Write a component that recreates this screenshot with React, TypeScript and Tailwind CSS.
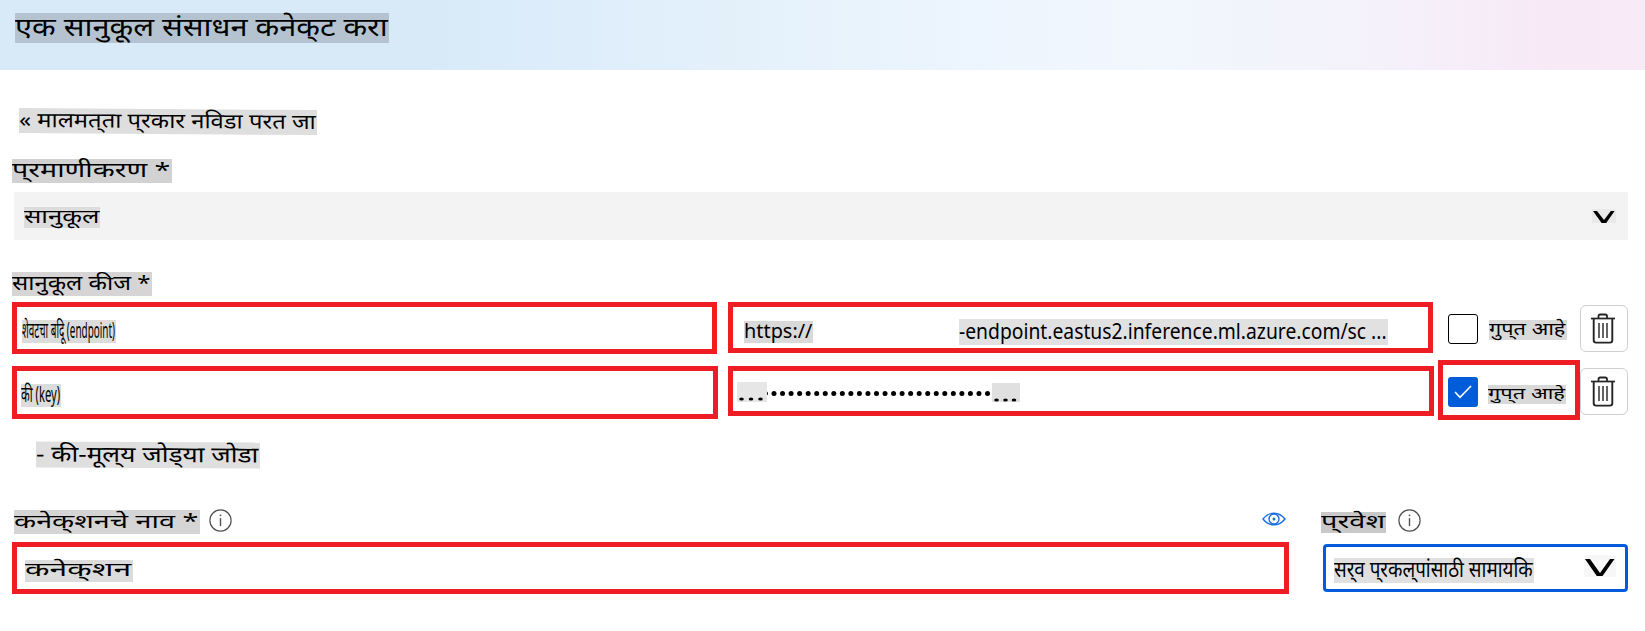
import { useLayoutEffect, useRef, useState } from "react";

type TextProps = { text: string; box: string; type: string };

/* Highlighted text whose glyphs are stretched to fill the width of its box. */
function FitText({ text, box, type }: TextProps) {
  const outer = useRef<HTMLSpanElement>(null);
  const inner = useRef<HTMLSpanElement>(null);
  const [scale, setScale] = useState(1);

  useLayoutEffect(() => {
    if (!outer.current || !inner.current) return;
    setScale((outer.current.offsetWidth - 1) / inner.current.offsetWidth);
  }, [text]);

  return (
    <span ref={outer} className={`flex shrink-0 items-start ${box}`}>
      <span
        ref={inner}
        className={`block h-5 shrink-0 origin-left whitespace-pre leading-5 ${type}`}
        style={{ transform: `scaleX(${scale})` }}
      >
        {text}
      </span>
    </span>
  );
}

function Trash() {
  return (
    <button className="flex h-[47px] w-12 shrink-0 items-center justify-center rounded-md border border-[#cfcfcf] bg-white pr-[2px]">
      <svg width="24" height="31" viewBox="0 0 24 31" fill="none" stroke="#242424">
        <path d="M0 5.5H24" strokeWidth="1.7" />
        <path d="M7.5 5V3.2Q7.5 1.5 9.2 1.5H14.3Q16 1.5 16 3.2V5" strokeWidth="1.8" />
        <path d="M2.7 6V27.3Q2.7 29.6 5 29.6H19Q21.3 29.6 21.3 27.3V6" strokeWidth="1.9" />
        <path d="M8 10V25M12 10V25M16 10V25" strokeWidth="1.4" />
      </svg>
    </button>
  );
}

function Info() {
  return (
    <svg className="shrink-0" width="23" height="23" viewBox="0 0 23 23" fill="none" stroke="#505050">
      <circle cx="11.5" cy="11.5" r="10.6" strokeWidth="1.2" />
      <path d="M11.5 9.2V17" strokeWidth="1.4" />
      <circle cx="11.5" cy="6.3" r="0.9" fill="#505050" stroke="none" />
    </svg>
  );
}

function Eye() {
  return (
    <svg className="shrink-0" width="24" height="14" viewBox="0 0 24 14" fill="none" stroke="#1a6ee0" strokeWidth="1.4">
      <path d="M1 7Q5.5 1.2 12 1.2T23 7Q18.5 12.8 12 12.8T1 7Z" />
      <circle cx="12" cy="7" r="5" />
      <circle cx="12" cy="7" r="1.5" fill="#1a6ee0" stroke="none" />
    </svg>
  );
}

const bullets = Array.from({ length: 26 }, (_, i) => i);

export default function App() {
  return (
    <div className="h-[631px] w-[1645px] overflow-hidden bg-white font-['Noto_Sans','Noto_Sans_Devanagari',sans-serif] text-black">
      <header className="flex h-[70px] items-start bg-[linear-gradient(90deg,#d8eaf8_0%,#d8eaf8_26%,#deedfa_35%,#e4f1fb_45%,#edf5fe_60%,#f2f7fe_69%,#f3f3fb_80%,#f5effa_87%,#f8e9f7_94%,#f9eaf8_100%)] pt-[13px] pl-[15px]">
        <FitText text="एक सानुकूल संसाधन कनेक्‌ट करा" box="h-[30px] w-[374px] bg-[#b4c3cf]" type="mt-[3px] text-[25px]" />
      </header>

      <main className="flex flex-col items-start pl-3">
        <a className="mt-[38px] ml-[7px] flex origin-left skew-y-[0.4deg]">
          <FitText text="« मालमत्‌ता प्‌रकार नविडा परत जा" box="h-[25px] w-[298px] bg-[#dedede]" type="mt-px text-[21px]" />
        </a>

        <div className="mt-[26px]">
          <FitText text="प्‌रमाणीकरण *" box="h-6 w-40 bg-[#d2d2d2]" type="mt-px text-[20px]" />
        </div>

        <div className="mt-[9px] ml-[2px] flex h-12 w-[1614px] items-start justify-between bg-[#f3f3f3] pr-3 pl-[10px]">
          <div className="mt-[15px]">
            <FitText text="सानुकूल" box="h-[21px] w-[76px] bg-[#dcdcdc]" type="-mt-px text-[18.5px]" />
          </div>
          <svg className="mt-[17px] bg-[#e9e9e9]" width="24" height="14" viewBox="0 0 24 14" fill="#000">
            <path d="M1 2H5L12 11L18.8 2H22.6L14.2 14H9.6Z" />
          </svg>
        </div>

        <div className="mt-8">
          <FitText text="सानुकूल कीज *" box="h-6 w-[140px] bg-[#d6d4d5]" type="mt-px text-[20px]" />
        </div>

        <div className="mt-[6px] flex h-[52px] items-start">
          <div className="flex h-[52px] w-[705px] items-start border-[5px] border-[#ee1c23] pt-[13px] pl-[5px]">
            <FitText text="शेवटचा बदिू (endpoint)" box="h-[23px] w-[94px] bg-[#dcdcdc]" type="-mt-px text-[22px]" />
          </div>
          <div className="ml-[11px] flex h-[51px] w-[705px] items-start border-[5px] border-[#ee1c23] pl-[11px]">
            <div className="mt-[14px]">
              <FitText text="https://" box="h-[22px] w-[69px] bg-[#d9d9d9]" type="text-[19px]" />
            </div>
            <div className="mt-3 ml-[146px]">
              <FitText text="-endpoint.eastus2.inference.ml.azure.com/sc ..." box="h-[26px] w-[429px] bg-[#e1e1e1]" type="mt-[2px] text-[21.5px]" />
            </div>
          </div>
          <div className="mt-3 ml-[15px] size-[30px] shrink-0 rounded-[3px] border border-black" />
          <div className="mt-[18px] ml-[11px]">
            <FitText text="गुप्‌त आहे" box="h-5 w-[78px] bg-[#dadada]" type="-mt-[2px] text-[17.5px]" />
          </div>
          <div className="mt-[3px] ml-[13px]">
            <Trash />
          </div>
        </div>

        <div className="mt-[6px] flex h-[60px] items-start">
          <div className="mt-[6px] flex h-[53px] w-[706px] items-start border-[5px] border-[#ee1c23] pt-[13px] pl-1">
            <FitText text="की (key)" box="h-[23px] w-[40px] bg-[#dcdcdc]" type="-mt-px text-[22px]" />
          </div>
          <div className="mt-[6px] ml-[10px] flex h-[50px] w-[706px] items-start border-[5px] border-[#ee1c23] pl-1">
            <div className="mt-[11px] h-5 w-[30px] bg-[#e6e6e6] pt-[14px]">
              <svg width="30" height="6" fill="#000">
                <ellipse cx="4.5" cy="3" rx="2.3" ry="1.6" />
                <ellipse cx="14" cy="3" rx="2.3" ry="1.6" />
                <ellipse cx="23.5" cy="3" rx="2.3" ry="1.6" />
              </svg>
            </div>
            <svg className="mt-[19px]" width="225" height="7" fill="#000">
              <path d="M0 1.5Q2 3.5 0 5.5Z" />
              {bullets.map((i) => (
                <circle key={i} cx={7 + i * 8.54} cy="3.5" r="2.5" />
              ))}
            </svg>
            <div className="mt-3 h-[19px] w-7 bg-[#e0e0e0] pt-[14px]">
              <svg width="28" height="6" fill="#000">
                <ellipse cx="4.5" cy="3" rx="2.3" ry="1.6" />
                <ellipse cx="13.5" cy="3" rx="2.3" ry="1.6" />
                <ellipse cx="22" cy="3" rx="2.3" ry="1.6" />
              </svg>
            </div>
          </div>
          <div className="ml-1 flex h-[60px] w-[142px] items-start border-[5px] border-[#ee1c23] pl-[5px]">
            <div className="mt-3 flex size-[30px] shrink-0 items-center justify-center rounded-[3px] bg-[#015cda]">
              <svg width="18" height="14" viewBox="0 0 18 14" fill="none" stroke="#fff" strokeWidth="1.6">
                <path d="M1 7L6 12.3L17 1" />
              </svg>
            </div>
            <div className="mt-5 ml-[10px]">
              <FitText text="गुप्‌त आहे" box="h-[19px] w-[78px] bg-[#d8d8d8]" type="-mt-[2px] text-[16.5px]" />
            </div>
          </div>
          <div className="mt-2">
            <Trash />
          </div>
        </div>

        <a className="mt-[22px] ml-6 flex skew-y-[0.25deg]">
          <FitText text="- की-मूल्‌य जोड्‌या जोडा" box="h-[26px] w-56 bg-[#dfdfdf]" type="mt-px text-[22px]" />
        </a>

        <div className="mt-[41px] flex h-[33px] w-[1616px] items-start">
          <div className="mt-px ml-[2px]">
            <FitText text="कनेक्‌शनचे नाव *" box="h-6 w-[186px] bg-[#d5d5d5]" type="mt-px text-[19px]" />
          </div>
          <div className="ml-[9px]">
            <Info />
          </div>
          <div className="mt-[3px] ml-[1030px]">
            <Eye />
          </div>
          <div className="mt-[3px] ml-[35px]">
            <FitText text="प्‌रवेश" box="h-[21px] w-[65px] bg-[#c9c9c9]" type="-mt-px text-[19px]" />
          </div>
          <div className="ml-3">
            <Info />
          </div>
        </div>

        <div className="flex items-start">
          <div className="flex h-[52px] w-[1277px] items-start border-[5px] border-[#ee1c23] pt-[13px] pl-2">
            <FitText text="कनेक्‌शन" box="h-[22px] w-[108px] bg-[#dcdcdc]" type="-mt-px text-[18.5px]" />
          </div>
          <div className="mt-[2px] ml-[34px] flex h-12 w-[305px] items-start justify-between rounded-[4px] border-[3px] border-[#015cda] pr-[9px] pl-2">
            <div className="mt-[11px]">
              <FitText text="सर्‌व प्‌रकल्‌पांसाठी सामायकि" box="h-[25px] w-[200px] bg-[#e0e0e0]" type="mt-px text-[21.5px]" />
            </div>
            <svg className="mt-2 bg-[#f7f7f7]" width="32" height="22" viewBox="0 0 32 22" fill="#000">
              <path d="M1 4H6L16 18L26 4H30.5L18.5 21H12.8Z" />
            </svg>
          </div>
        </div>
      </main>
    </div>
  );
}
